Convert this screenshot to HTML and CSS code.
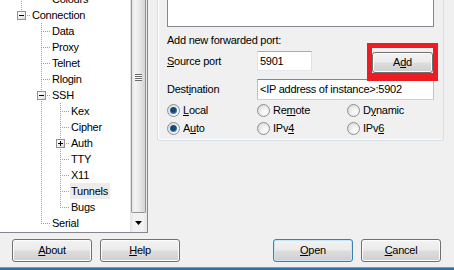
FILE: index.html
```html
<!DOCTYPE html>
<html lang="en">
<head>
    <meta charset="UTF-8">
    <title>PuTTY Configuration - Tunnels</title>
    <link rel="stylesheet" href="styles.css">
</head>
<body>
    <div class="main">
        <!-- Category tree -->
        <div class="tree">
            <div class="tree-items">
                <div class="node first"><span class="guide pipe"></span><span class="guide elbow"></span><span class="label">Colours</span></div>
                <div class="node"><span class="guide elbow"><span class="expander minus"></span></span><span class="label">Connection</span></div>
                <div class="node"><span class="guide"></span><span class="guide tee"></span><span class="label">Data</span></div>
                <div class="node"><span class="guide"></span><span class="guide tee"></span><span class="label">Proxy</span></div>
                <div class="node"><span class="guide"></span><span class="guide tee"></span><span class="label">Telnet</span></div>
                <div class="node"><span class="guide"></span><span class="guide tee"></span><span class="label">Rlogin</span></div>
                <div class="node"><span class="guide"></span><span class="guide tee"><span class="expander minus"></span></span><span class="label">SSH</span></div>
                <div class="node"><span class="guide"></span><span class="guide pipe"></span><span class="guide narrow tee"></span><span class="label">Kex</span></div>
                <div class="node"><span class="guide"></span><span class="guide pipe"></span><span class="guide narrow tee"></span><span class="label">Cipher</span></div>
                <div class="node"><span class="guide"></span><span class="guide pipe"></span><span class="guide narrow tee"><span class="expander plus"></span></span><span class="label">Auth</span></div>
                <div class="node"><span class="guide"></span><span class="guide pipe"></span><span class="guide narrow tee"></span><span class="label">TTY</span></div>
                <div class="node"><span class="guide"></span><span class="guide pipe"></span><span class="guide narrow tee"></span><span class="label">X11</span></div>
                <div class="node"><span class="guide"></span><span class="guide pipe"></span><span class="guide narrow tee"></span><span class="label selected">Tunnels</span></div>
                <div class="node"><span class="guide"></span><span class="guide pipe"></span><span class="guide narrow elbow"></span><span class="label">Bugs</span></div>
                <div class="node"><span class="guide"></span><span class="guide elbow"></span><span class="label">Serial</span></div>
            </div>
            <div class="scrollbar">
                <div class="thumb"><div class="grip"></div></div>
                <div class="scroll-down">
                    <svg width="7" height="4" viewBox="0 0 7 4"><polygon points="0,0 7,0 3.5,4" fill="#000"/></svg>
                </div>
            </div>
        </div>

        <!-- Port forwarding panel -->
        <div class="panel">
            <div class="group">
                <div class="listbox"></div>
                <div class="caption">Add new forwarded port:</div>
                <div class="field-row source">
                    <span class="field-label"><u>S</u>ource port</span>
                    <div class="textbox port">5901</div>
                    <div class="add-wrap">
                        <button class="btn add">A<u>d</u>d</button>
                        <div class="highlight"></div>
                    </div>
                </div>
                <div class="field-row dest">
                    <span class="field-label">Dest<u>i</u>nation</span>
                    <div class="textbox wide focused">&lt;IP address of instance&gt;:5902</div>
                </div>
                <div class="radios">
                    <label class="radio checked"><span class="dot"></span><span><u>L</u>ocal</span></label>
                    <label class="radio"><span class="dot"></span><span>Re<u>m</u>ote</span></label>
                    <label class="radio"><span class="dot"></span><span>D<u>y</u>namic</span></label>
                    <label class="radio checked"><span class="dot"></span><span>A<u>u</u>to</span></label>
                    <label class="radio"><span class="dot"></span><span>IPv<u>4</u></span></label>
                    <label class="radio"><span class="dot"></span><span>IPv<u>6</u></span></label>
                </div>
            </div>
        </div>
    </div>

    <div class="actions">
        <button class="btn about"><u>A</u>bout</button>
        <button class="btn help"><u>H</u>elp</button>
        <button class="btn default open"><u>O</u>pen</button>
        <button class="btn cancel"><u>C</u>ancel</button>
    </div>
    <div class="frame"></div>
</body>
</html>
```

FILE: styles.css
```css
body {
    margin: 0;
    width: 454px;
    height: 270px;
    overflow: hidden;
    background: #f0f0f0;
    font-family: "Liberation Sans", Arial, sans-serif;
    font-size: 11px;
    letter-spacing: -0.25px;
    color: #000;
}
u {
    text-decoration-thickness: 1px;
}
.main {
    display: flex;
    height: 233px;
}

/* Tree view */
.tree {
    width: 148px;
    height: 233px;
    box-sizing: border-box;
    display: flex;
    background: #fff;
    border-right: 1px solid #828790;
    border-bottom: 1px solid #828790;
}
.tree-items {
    width: 130px;
    box-sizing: border-box;
    padding-left: 11px;
    overflow: hidden;
}
.node {
    display: flex;
    height: 16px;
}
.node.first {
    margin-top: -9px;
}
.guide {
    --x: 10px;
    flex: none;
    display: flex;
    width: 20px;
    height: 16px;
}
.guide.narrow {
    --x: 9px;
    width: 19px;
}
.pipe {
    background: repeating-linear-gradient(#a0a0a0 0 1px, transparent 1px 2px) var(--x) 0 / 1px 16px no-repeat;
}
.tee {
    background:
        repeating-linear-gradient(to right, #a0a0a0 0 1px, transparent 1px 2px) calc(var(--x) + 2px) 8px / 100% 1px no-repeat,
        repeating-linear-gradient(#a0a0a0 0 1px, transparent 1px 2px) var(--x) 0 / 1px 16px no-repeat;
}
.elbow {
    background:
        repeating-linear-gradient(to right, #a0a0a0 0 1px, transparent 1px 2px) calc(var(--x) + 2px) 8px / 100% 1px no-repeat,
        repeating-linear-gradient(#a0a0a0 0 1px, transparent 1px 2px) var(--x) 0 / 1px 9px no-repeat;
}
.expander {
    display: flex;
    align-items: center;
    justify-content: center;
    width: 9px;
    height: 9px;
    box-sizing: border-box;
    margin: 4px 0 0 calc(var(--x) - 4px);
    border: 1px solid #919191;
    background: linear-gradient(135deg, #ffffff, #f0f0f0 50%, #dcdcdc);
}
.expander::before {
    content: "";
    width: 5px;
    height: 1px;
    background: #000;
}
.expander.plus {
    background:
        linear-gradient(#000, #000) 3px 1px / 1px 5px no-repeat,
        linear-gradient(135deg, #ffffff, #f0f0f0 50%, #dcdcdc);
}
.label {
    line-height: 16px;
    padding: 0 2px 0 1px;
    white-space: nowrap;
}
.label.selected {
    background: #ececec;
}

/* Scrollbar */
.scrollbar {
    width: 17px;
    display: flex;
    flex-direction: column;
    background: linear-gradient(to right, #e3e3e3, #f2f2f2 20%, #f2f2f2 80%, #e6e6e6);
}
.thumb {
    height: 213px;
    margin: 0 1px;
    box-sizing: border-box;
    display: flex;
    justify-content: center;
    border: 1px solid #959595;
    border-top: none;
    border-radius: 0 0 2px 2px;
    background: linear-gradient(to right, #e4e4e4, #f4f4f4 25%, #e8e8e8 60%, #d3d3d3);
}
.grip {
    width: 7px;
    height: 7px;
    margin-top: 74px;
    background: repeating-linear-gradient(#6a6a6a 0 1px, #fafafa 1px 2px);
}
.scroll-down {
    height: 17px;
    margin-top: 1px;
    display: flex;
    align-items: center;
    justify-content: center;
}

/* Right-hand panel */
.panel {
    flex: 1;
}
.group {
    width: 287px;
    margin-left: 9px;
    box-sizing: border-box;
    padding: 0 9px 3px;
    border: 1px solid #d5dfe5;
    border-top: none;
    border-radius: 0 0 3px 3px;
    box-shadow: inset 1px 0 0 #fff, inset 0 -1px 0 #fff;
}
.listbox {
    height: 27px;
    box-sizing: border-box;
    background: #fff;
    border: 1px solid #828790;
    border-top: none;
}
.caption {
    margin-top: 7px;
    line-height: 13px;
}
.field-row {
    display: flex;
    align-items: flex-start;
}
.field-row.source {
    margin-top: 4px;
    height: 22px;
}
.field-row.dest {
    margin-top: 6px;
}
.field-label {
    width: 90px;
    flex: none;
    line-height: 20px;
}
.dest .field-label {
    line-height: 21px;
}
.textbox {
    height: 20px;
    box-sizing: border-box;
    padding: 0 2px;
    line-height: 18px;
    background: #fff;
    border: 1px solid;
    border-color: #abadb3 #dbdfe6 #e3e9ef #e2e3ea;
    white-space: nowrap;
}
.textbox.port {
    width: 55px;
}
.textbox.wide {
    flex: 1;
    height: 21px;
    line-height: 19px;
}
.textbox.focused {
    border-color: #5c93bc #a4c9e3 #b7d9ed #a4c9e3;
}
.add-wrap {
    position: relative;
    margin: 1px 0 0 60px;
}
/* red annotation frame drawn over the Add button */
.highlight {
    position: absolute;
    top: -9px;
    left: -5px;
    right: -5px;
    bottom: -8px;
    border: solid #ed1c24;
    border-width: 5px 5px 8px 5px;
}
.radios {
    display: grid;
    grid-template-columns: 90px 90px 1fr;
    grid-auto-rows: 18px;
    margin-top: 1px;
}
.radio {
    display: flex;
    align-items: center;
    gap: 3px;
}
.dot {
    width: 13px;
    height: 13px;
    box-sizing: border-box;
    display: flex;
    align-items: center;
    justify-content: center;
    border: 1px solid #8e8f8f;
    border-radius: 50%;
    background: radial-gradient(circle at 65% 65%, #ffffff 0, #f2f2f2 35%, #d0d0d0 100%);
}
.radio.checked .dot::after {
    content: "";
    width: 7px;
    height: 7px;
    border-radius: 50%;
    background: radial-gradient(circle at 45% 40%, #1b5586 0, #123f68 35%, #3b8ccc 75%, #7cc0ec 100%);
}

/* Buttons */
.btn {
    box-sizing: border-box;
    width: 80px;
    height: 23px;
    margin: 0;
    padding: 0;
    font: inherit;
    letter-spacing: inherit;
    color: #000;
    line-height: 21px;
    text-align: center;
    border: 1px solid #707070;
    border-radius: 3px;
    background: linear-gradient(#f2f2f2, #ebebeb 48%, #dddddd 52%, #cfcfcf);
    box-shadow: inset 0 0 0 1px #fcfcfc;
}
.btn.add {
    display: block;
    width: 61px;
    height: 21px;
    line-height: 19px;
}
.btn.default {
    border-color: #3c7fb1;
    box-shadow: inset 0 0 0 1px #c8e6f7;
}
.actions {
    display: flex;
    height: 34px;
    box-sizing: border-box;
    padding-top: 6px;
}
.about {
    margin-left: 12px;
}
.help {
    margin-left: 8px;
}
.open {
    margin-left: auto;
}
.cancel {
    margin: 0 13px 0 8px;
}
.frame {
    height: 3px;
    background: #2f70a5;
    border-top: 1px solid #7b9cb8;
}
```
